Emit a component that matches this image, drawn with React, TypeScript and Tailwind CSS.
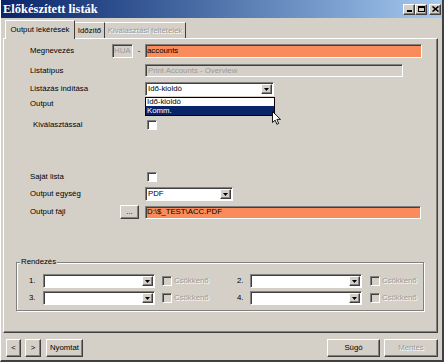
import React from 'react'

const sunken =
  'border border-t-[#808080] border-l-[#808080] border-b-white border-r-white shadow-[inset_1px_1px_0_#404040]'
const raised =
  'border border-t-white border-l-white border-b-[#404040] border-r-[#404040] shadow-[inset_-1px_-1px_0_#808080] bg-[#d4d0c8]'

const Arrow = () => (
  <svg width="5" height="3" viewBox="0 0 5 3">
    <path d="M0 0h5L2.5 3z" fill="#000" />
  </svg>
)

const Combo = ({ w, value }: { w: string; value?: string }) => (
  <div className={`${w} h-[14px] bg-white flex items-center ${sunken}`}>
    <span className="flex-1 pl-[2px] leading-none">{value}</span>
    <div className={`w-[11px] h-[10px] mr-[1px] flex items-center justify-center ${raised}`}>
      <Arrow />
    </div>
  </div>
)

const Check = ({ disabled }: { disabled?: boolean }) => (
  <div className={`w-[10px] h-[10px] shrink-0 ${sunken} ${disabled ? 'bg-[#d4d0c8]' : 'bg-white'}`} />
)

const Btn = ({ w, label, disabled }: { w: string; label: string; disabled?: boolean }) => (
  <div
    className={`${w} h-[18px] flex items-center justify-center ${raised} ${
      disabled ? 'text-[#9a9a9a] [text-shadow:1px_1px_0_white]' : ''
    }`}
  >
    {label}
  </div>
)

const SortRow = ({ a, b }: { a: string; b: string }) => (
  <div className="flex items-center h-[14px]">
    <div className="w-[220px] flex items-center pl-[12px]">
      <span className="w-[14px]">{a}</span>
      <Combo w="w-[112px]" />
      <div className="ml-[7px]">
        <Check disabled />
      </div>
      <span className="ml-[2px] text-[#9a9a9a] [text-shadow:1px_1px_0_white]">Csökkenő</span>
    </div>
    <span className="w-[13px]">{b}</span>
    <Combo w="w-[112px]" />
    <div className="ml-[8px]">
      <Check disabled />
    </div>
    <span className="ml-[2px] text-[#9a9a9a] [text-shadow:1px_1px_0_white]">Csökkenő</span>
  </div>
)

export default function App() {
  return (
    <div className="w-[444px] h-[362px] bg-[#d4d0c8] font-['Liberation_Sans',Arial,sans-serif] text-[7.8px] text-black flex flex-col border-l border-l-white border-r-2 border-r-[#404040] border-b-2 border-b-[#404040] overflow-hidden select-none">
      {/* title bar */}
      <div className="h-[18px] shrink-0 flex items-center justify-between pl-[2px] pr-[1px] bg-linear-to-r from-[#0a246a] to-[#a6caf0]">
        <span className="font-['Liberation_Serif',serif] font-bold text-[12.5px] text-white leading-none">
          Előkészített listák
        </span>
        <div className="flex items-center">
          <div className={`w-[12px] h-[11px] flex items-end justify-center pb-[2px] ${raised}`}>
            <div className="w-[5px] h-[2px] bg-black" />
          </div>
          <div className={`w-[12px] h-[11px] flex items-center justify-center ${raised}`}>
            <div className="w-[7px] h-[6px] border border-black border-t-2" />
          </div>
          <div className={`ml-[2px] w-[12px] h-[11px] flex items-center justify-center ${raised}`}>
            <svg width="7" height="6" viewBox="0 0 7 6">
              <path d="M0.5 0.5l6 5M6.5 0.5l-6 5" stroke="#000" strokeWidth="1.6" />
            </svg>
          </div>
        </div>
      </div>

      {/* tabs */}
      <div className="mt-[2px] h-[18px] flex items-end pl-[4px]">
        <div className="relative z-10 -mb-[1px] w-[70px] h-[19px] flex items-center justify-center bg-[#d4d0c8] border-t border-l border-t-white border-l-white border-r border-r-[#404040]">
          Output lekérések
        </div>
        <div className="w-[30px] h-[16px] flex items-center justify-center border-t border-t-white border-r border-r-[#404040]">
          Időzítő
        </div>
        <div className="w-[81px] h-[16px] flex items-center justify-center border-t border-t-white border-r border-r-[#404040] text-[#9a9a9a] [text-shadow:1px_1px_0_white]">
          Kiválasztási feltételek
        </div>
      </div>

      {/* tab panel */}
      <div className="relative ml-[2px] w-[435px] h-[295px] shrink-0 flex flex-col border border-t-white border-l-white border-r-[#404040] border-b-[#404040] shadow-[inset_-1px_-1px_0_#808080]">
        <div className="mt-[5px] h-[14px] flex items-center pl-[26px]">
          <span className="w-[82px]">Megnevezés</span>
          <div className={`w-[21px] h-[14px] bg-[#d4d0c8] text-[#9a9a9a] pl-[1px] flex items-center ${sunken}`}>HUA</div>
          <span className="w-[12px] text-center">-</span>
          <div className={`w-[277px] h-[14px] bg-[#fa8c5c] pl-[1px] flex items-center ${sunken}`}>accounts</div>
        </div>

        <div className="mt-[6px] h-[13px] flex items-center pl-[26px]">
          <span className="w-[115px]">Listatípus</span>
          <div className={`w-[258px] h-[13px] bg-[#d4d0c8] text-[#9a9a9a] pl-[2px] flex items-center ${sunken}`}>
            Print Accounts - Overview
          </div>
        </div>

        <div className="mt-[5px] h-[14px] flex items-center pl-[26px]">
          <span className="w-[115px]">Listázás indítása</span>
          <Combo w="w-[129px]" value="Idő-kioldó" />
        </div>

        <div className="mt-[1px] h-[14px] flex items-center pl-[26px]">
          <span>Output</span>
        </div>

        <div className="mt-[7px] h-[14px] flex items-center pl-[29px]">
          <span className="w-[114px]">Kiválasztással</span>
          <Check />
        </div>

        <div className="mt-[38px] h-[14px] flex items-center pl-[26px]">
          <span className="w-[117px]">Saját lista</span>
          <Check />
        </div>

        <div className="mt-[3px] h-[14px] flex items-center pl-[26px]">
          <span className="w-[115px]">Output egység</span>
          <Combo w="w-[88px]" value="PDF" />
        </div>

        <div className="mt-[4px] h-[14px] flex items-center pl-[26px]">
          <span className="w-[90px]">Output fájl</span>
          <div className={`w-[19px] h-[14px] flex items-center justify-center leading-none ${raised}`}>...</div>
          <div className={`ml-[6px] w-[276px] h-[13px] bg-[#fa8c5c] pl-[1px] flex items-center ${sunken}`}>
            D:\$_TEST\ACC.PDF
          </div>
        </div>

        {/* Rendezés group */}
        <div className="relative mt-[43px] ml-[12px] w-[408px] h-[49px] border border-[#808080] shadow-[inset_1px_1px_0_white,1px_1px_0_white] flex flex-col pt-[11px] gap-[3px]">
          <span className="absolute -top-[5px] left-[3px] px-[1px] bg-[#d4d0c8] leading-none">Rendezés</span>
          <SortRow a="1." b="2." />
          <SortRow a="3." b="4." />
        </div>

        {/* open dropdown list */}
        <div className="absolute left-[141px] top-[58px] w-[130px] h-[19px] bg-white border border-black flex flex-col">
          <div className="h-[8px] flex items-center pl-[1px]">Idő-kioldó</div>
          <div className="h-[9px] flex items-center pl-[1px] bg-[#0a246a] text-white">Komm.</div>
        </div>
        <svg className="absolute left-[268px] top-[72px]" width="9" height="14" viewBox="0 0 9 14">
          <path d="M0.5 0.5v11l2.6-2.4 1.8 4.2 1.8-0.8-1.8-4.1h3.6z" fill="#fff" stroke="#000" strokeWidth="0.9" />
        </svg>
      </div>

      {/* bottom buttons */}
      <div className="mt-[6px] flex items-center pl-[5px] pr-[4px]">
        <Btn w="w-[15px]" label="<" />
        <div className="ml-[4px]">
          <Btn w="w-[16px]" label=">" />
        </div>
        <div className="ml-[5px]">
          <Btn w="w-[37px]" label="Nyomtat" />
        </div>
        <div className="flex-1" />
        <Btn w="w-[53px]" label="Súgó" />
        <div className="ml-[4px]">
          <Btn w="w-[54px]" label="Mentés" disabled />
        </div>
      </div>
    </div>
  )
}
